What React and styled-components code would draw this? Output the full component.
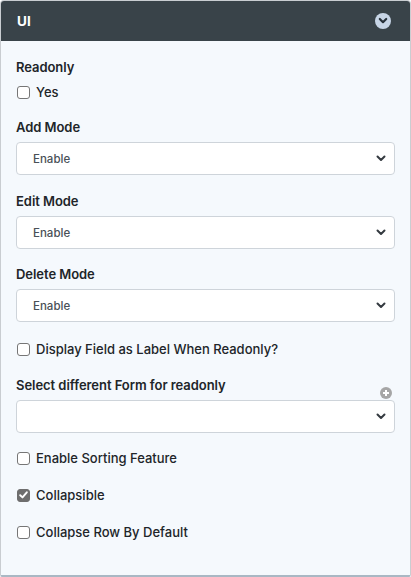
import React from "react";
import styled, { createGlobalStyle } from "styled-components";

const Global = createGlobalStyle`
  html, body { margin: 0; padding: 0; background: #ffffff; }
  body { font-family: Inter, "Noto Sans", "Liberation Sans", sans-serif; }
  * { box-sizing: border-box; }
`;

const Panel = styled.section`
  width: 411px;
  height: 577px;
  display: flex;
  flex-direction: column;
  border: 1px solid #c9cdd1;
  border-bottom: 2px solid #a9b8c4;
  border-radius: 4px 4px 2px 2px;
  overflow: hidden;
  background: #f5f9fd;
`;

const Header = styled.header`
  height: 40px;
  flex: none;
  display: flex;
  align-items: center;
  justify-content: space-between;
  padding: 0 19px 0 16px;
  background: #394349;
  color: #ffffff;
  font-weight: 700;
  font-size: 13.5px;
`;

const Toggle = styled.span`
  width: 16px;
  height: 16px;
  border-radius: 50%;
  background: #c7d5e6;
  display: flex;
  align-items: center;
  justify-content: center;
`;

const Body = styled.div`
  display: flex;
  flex-direction: column;
  padding: 18px 15px 0 15px;
`;

const Group = styled.div`
  display: flex;
  flex-direction: column;
  margin-bottom: ${(p) => p.$gap ?? 15}px;
`;

const LabelRow = styled.div`
  display: flex;
  align-items: flex-end;
  justify-content: space-between;
  height: 16px;
  margin-bottom: ${(p) => p.$space ?? 7}px;
`;

const Label = styled.label`
  font-size: 13px;
  font-weight: 600;
  color: #212529;
  letter-spacing: -0.05px;
`;

const CheckRow = styled.label`
  display: flex;
  align-items: center;
  gap: 6px;
  height: 16px;
  margin-bottom: ${(p) => p.$gap ?? 21}px;
  font-size: 13px;
  font-weight: 500;
  color: #212529;
  padding-left: 1px;
`;

const Box = styled.span`
  width: 13px;
  height: 13px;
  border-radius: 3px;
  border: 1px solid ${(p) => (p.$on ? "#6e6e6e" : "#767676")};
  background: ${(p) => (p.$on ? "#6e6e6e" : "#ffffff")};
  display: flex;
  align-items: center;
  justify-content: center;
  flex: none;
`;

const SelectWrap = styled.div`
  position: relative;
  height: 33px;
`;

const Select = styled.select`
  appearance: none;
  -webkit-appearance: none;
  width: 100%;
  height: 100%;
  border: 1px solid #ced4da;
  border-radius: 4px;
  background: #ffffff;
  padding: 0 30px 0 16px;
  font-family: inherit;
  font-size: 11.5px;
  font-weight: 500;
  color: #495057;
  outline: none;
`;

const Caret = styled.svg`
  position: absolute;
  right: 9px;
  top: 13px;
  pointer-events: none;
`;

const Check = ({ label, on, gap }) => (
  <CheckRow $gap={gap}>
    <Box $on={on}>
      {on && (
        <svg width="9" height="8" viewBox="0 0 9 8">
          <path d="M1.2 4.2 L3.5 6.4 L7.8 1.3" fill="none" stroke="#fff" strokeWidth="1.9" strokeLinecap="round" strokeLinejoin="round" />
        </svg>
      )}
    </Box>
    {label}
  </CheckRow>
);

const Dropdown = ({ value }) => (
  <SelectWrap>
    <Select defaultValue={value}>
      {value ? <option>{value}</option> : <option value=""></option>}
    </Select>
    <Caret width="10" height="7" viewBox="0 0 10 7">
      <path d="M1.5 1.5 L5 5 L8.5 1.5" fill="none" stroke="#343a40" strokeWidth="2" strokeLinecap="round" strokeLinejoin="round" />
    </Caret>
  </SelectWrap>
);

const AddIcon = () => (
  <svg width="12" height="12" viewBox="0 0 12 12" style={{ marginRight: 3, marginBottom: -6 }}>
    <circle cx="6" cy="6" r="6" fill="#a6a6a6" />
    <path d="M6 3 V9 M3 6 H9" stroke="#fff" strokeWidth="2" />
  </svg>
);

export default function App() {
  return (
    <>
      <Global />
      <Panel>
        <Header>
          <span>UI</span>
          <Toggle>
            <svg width="10" height="8" viewBox="0 0 10 8">
              <path d="M1.8 2 L5 5.2 L8.2 2" fill="none" stroke="#27313a" strokeWidth="2.2" strokeLinecap="round" strokeLinejoin="round" />
            </svg>
          </Toggle>
        </Header>
        <Body>
          <Group $gap={19}>
            <LabelRow $space={9}>
              <Label>Readonly</Label>
            </LabelRow>
            <Check label="Yes" gap={0} />
          </Group>
          <Group $gap={18}>
            <LabelRow>
              <Label>Add Mode</Label>
            </LabelRow>
            <Dropdown value="Enable" />
          </Group>
          <Group $gap={17}>
            <LabelRow>
              <Label>Edit Mode</Label>
            </LabelRow>
            <Dropdown value="Enable" />
          </Group>
          <Group $gap={19}>
            <LabelRow>
              <Label>Delete Mode</Label>
            </LabelRow>
            <Dropdown value="Enable" />
          </Group>
          <Check label="Display Field as Label When Readonly?" gap={20} />
          <Group $gap={17}>
            <LabelRow $space={7}>
              <Label>Select different Form for readonly</Label>
              <AddIcon />
            </LabelRow>
            <Dropdown value="" />
          </Group>
          <Check label="Enable Sorting Feature" />
          <Check label="Collapsible" on />
          <Check label="Collapse Row By Default" />
        </Body>
      </Panel>
    </>
  );
}
